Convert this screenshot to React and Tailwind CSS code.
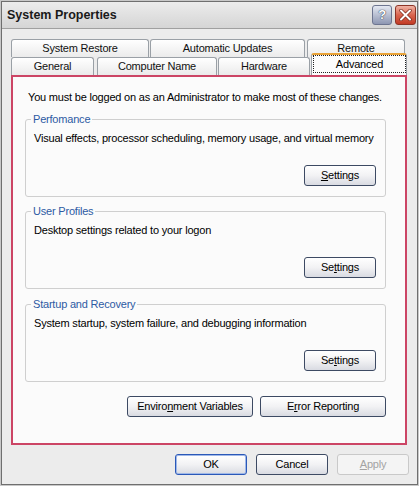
import React from "react";

function Btn({ children, className = "", variant = "normal" }) {
  const base =
    "h-[21px] rounded-[3px] flex items-center justify-center leading-[13px] text-[11px]";
  const styles = {
    normal:
      "border border-[#3d4a63] bg-gradient-to-b from-[#ffffff] via-[#f2f2f4] to-[#d9dbe2] text-black",
    default:
      "border border-[#2a58b8] bg-gradient-to-b from-[#ffffff] via-[#f2f2f4] to-[#d9dbe2] text-black shadow-[inset_0_0_0_1px_#9fb8e8]",
    disabled:
      "border border-[#c9c9c9] bg-[#f4f4f4] text-[#a3a3a3]",
  };
  return <div className={`${base} ${styles[variant]} ${className}`}>{children}</div>;
}

function Group({ title, text, button, mt }) {
  return (
    <fieldset
      className={`${mt} h-[84px] min-w-0 border border-[#cfcfcf] rounded-[3px] pl-[8px] pr-[9px] pt-[6px]`}
    >
      <legend className="ml-[-3px] px-[2px] leading-[13px] text-[#2d5aa3]">{title}</legend>
      <p className="leading-[13px]">{text}</p>
      <div className="mt-[20px] flex justify-end">{button}</div>
    </fieldset>
  );
}

function Tab({ children, className = "" }) {
  return (
    <div
      className={`h-[18px] flex items-center justify-center rounded-t-[3px] border-x border-t border-[#9aa0a6] bg-gradient-to-b from-[#ffffff] to-[#ebebeb] leading-[13px] text-[#111] ${className}`}
    >
      {children}
    </div>
  );
}

export default function App() {
  return (
    <div className="w-[419px] h-[486px] border border-[#c8c8c8] bg-[#ececec] font-['Liberation_Sans',Arial,sans-serif] text-[11px] tracking-[-0.2px] text-black">
      <div className="h-full border border-[#6f6f6f] flex flex-col">
        {/* Title bar */}
        <div className="h-[27px] shrink-0 flex items-center justify-between pl-[5px] pr-[1px] bg-gradient-to-b from-[#ececec] to-[#d5d5d5] border-b border-[#a0a0a0]">
          <span className="font-bold text-[12.5px] tracking-normal text-[#1a1a1a]">System Properties</span>
          <div className="flex items-center gap-[3px]">
            <div className="w-[20px] h-[20px] rounded-[3px] border border-[#6d7590] bg-gradient-to-b from-[#e4e8f2] to-[#8e97b2] flex items-center justify-center text-white font-bold text-[13px] [text-shadow:0_0_1px_#2a2f40,0_0_1px_#2a2f40]">
              ?
            </div>
            <div className="w-[21px] h-[20px] rounded-[3px] border border-[#8c3426] bg-gradient-to-b from-[#eeb2a4] via-[#d9644e] to-[#c23a24] flex items-center justify-center">
              <svg width="13" height="12" viewBox="0 0 13 12">
                <path d="M2 1.5 L11 10.5 M11 1.5 L2 10.5" stroke="#7a2a1c" strokeWidth="3.4" strokeLinecap="round" />
                <path d="M2 1.5 L11 10.5 M11 1.5 L2 10.5" stroke="#ffffff" strokeWidth="2" strokeLinecap="round" />
              </svg>
            </div>
          </div>
        </div>

        {/* Body */}
        <div className="flex-1 flex flex-col pl-[9px] pr-[9px] pt-[10px]">
          {/* Tabs row 1 */}
          <div className="flex h-[18px]">
            <Tab className="w-[138px]">System Restore</Tab>
            <Tab className="w-[155px] ml-[1px]">Automatic Updates</Tab>
            <Tab className="w-[98px] ml-[2px]">Remote</Tab>
          </div>
          {/* Tabs row 2 */}
          <div className="flex h-[18px] items-end">
            <Tab className="w-[83px]">General</Tab>
            <Tab className="w-[120px] ml-[3px]">Computer Name</Tab>
            <Tab className="w-[92px] ml-[1px]">Hardware</Tab>
            <div className="relative w-[96px] h-[22px] shrink-0 ml-[1px] rounded-t-[3px] border-x border-[#9aa0a6] border-t-2 border-t-[#eaa337] bg-[#fcfcfc] pl-[1px] pt-[0px]">
              <div className="h-[18px] border border-dotted border-[#222] flex items-center justify-center leading-[13px]">
                Advanced
              </div>
            </div>
          </div>

          {/* Panel */}
          <div className="w-[396px] h-[370px] border-2 border-[#cc4565] bg-[#fbfbfb] pl-[12px] pr-[19px] pt-[14px] flex flex-col">
            <p className="ml-[3px] leading-[13px]">
              You must be logged on as an Administrator to make most of these changes.
            </p>
            <Group
              mt="mt-[9px]"
              title="Perfomance"
              text="Visual effects, processor scheduling, memory usage, and virtual memory"
              button={
                <Btn className="w-[72px]">
                  <span className="underline">S</span>ettings
                </Btn>
              }
            />
            <Group
              mt="mt-[8px]"
              title="User Profiles"
              text="Desktop settings related to your logon"
              button={
                <Btn className="w-[72px]">
                  Se<span className="underline">t</span>tings
                </Btn>
              }
            />
            <Group
              mt="mt-[9px]"
              title="Startup and Recovery"
              text="System startup, system failure, and debugging information"
              button={
                <Btn className="w-[72px]">
                  Se<span className="underline">t</span>tings
                </Btn>
              }
            />
            <div className="mt-[14px] flex justify-end gap-[7px]">
              <Btn className="w-[126px]">
                Enviro<span className="underline">n</span>ment Variables
              </Btn>
              <Btn className="w-[126px]">
                E<span className="underline">r</span>ror Reporting
              </Btn>
            </div>
          </div>

          {/* Bottom buttons */}
          <div className="mt-[9px] mr-[-1px] flex justify-end gap-[9px]">
            <Btn variant="default" className="w-[72px]">OK</Btn>
            <Btn className="w-[72px]">Cancel</Btn>
            <Btn variant="disabled" className="w-[72px]">
              <span className="underline">A</span>pply
            </Btn>
          </div>
        </div>
      </div>
    </div>
  );
}
